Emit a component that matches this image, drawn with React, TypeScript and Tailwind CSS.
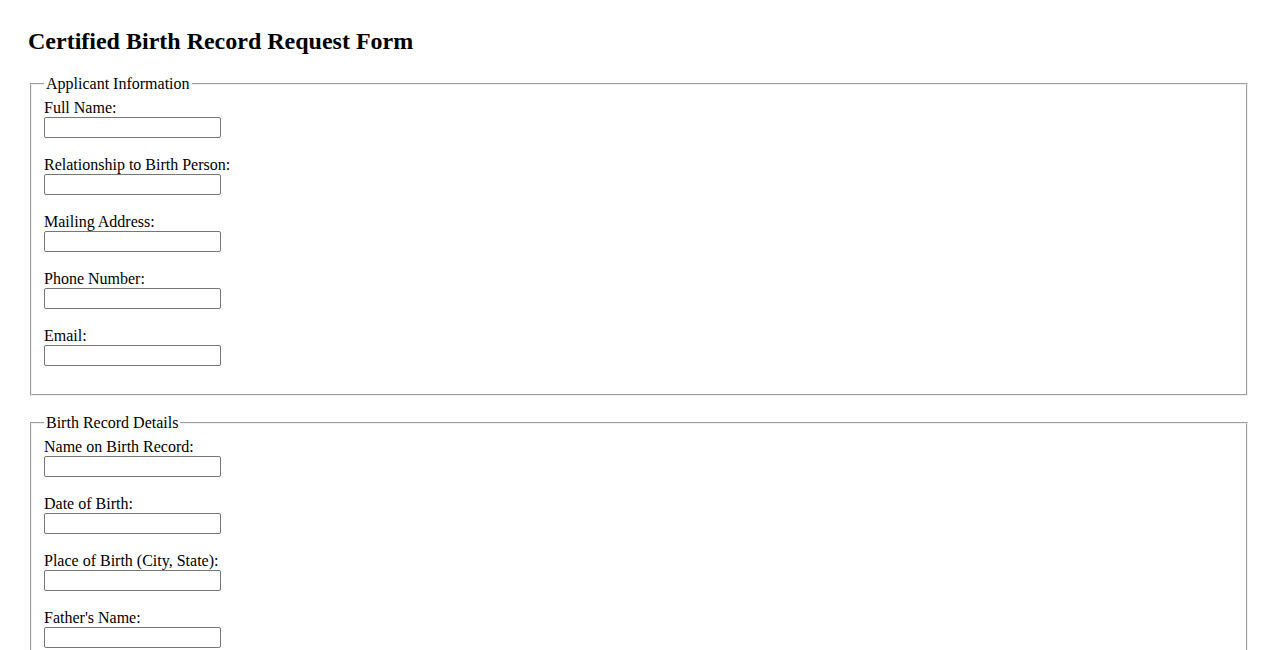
import React from 'react';

type Field = { id: string; label: string };

const applicantFields: Field[] = [
  { id: 'fullName', label: 'Full Name:' },
  { id: 'relationship', label: 'Relationship to Birth Person:' },
  { id: 'address', label: 'Mailing Address:' },
  { id: 'phone', label: 'Phone Number:' },
  { id: 'email', label: 'Email:' },
];

const recordFields: Field[] = [
  { id: 'recordName', label: 'Name on Birth Record:' },
  { id: 'dob', label: 'Date of Birth:' },
  { id: 'pob', label: 'Place of Birth (City, State):' },
  { id: 'father', label: "Father's Name:" },
  { id: 'mother', label: "Mother's Maiden Name:" },
];

const FormField: React.FC<{ field: Field }> = ({ field }) => (
  <div className="mb-[18px] flex flex-col items-start">
    <label htmlFor={field.id} className="h-[18px] leading-[18px]">
      {field.label}
    </label>
    <input
      id={field.id}
      type="text"
      className="h-[21px] w-[177px] rounded-[2px] border border-[#767676] bg-white px-[2px] text-[13.33px]"
    />
  </div>
);

const Section: React.FC<{ title: string; fields: Field[] }> = ({ title, fields }) => (
  <fieldset className="mx-[2px] border-2 border-[#f0f0f0] px-[12px] pt-[5.6px] pb-[10px] [border-style:groove]">
    <legend className="px-[2px] leading-[18.4px]">{title}</legend>
    {fields.map((f) => (
      <FormField key={f.id} field={f} />
    ))}
  </fieldset>
);

export default function App() {
  return (
    <div className="min-h-screen bg-white px-[28px] pt-[8px] pb-[20px] font-['Liberation_Serif',serif] text-[16px] text-black">
      <h2 className="mt-[19.92px] mb-[19px] text-[24px] leading-[27.6px] font-bold">
        Certified Birth Record Request Form
      </h2>
      <form>
        <Section title="Applicant Information" fields={applicantFields} />
        <div className="mt-[18px]">
          <Section title="Birth Record Details" fields={recordFields} />
        </div>
      </form>
    </div>
  );
}
